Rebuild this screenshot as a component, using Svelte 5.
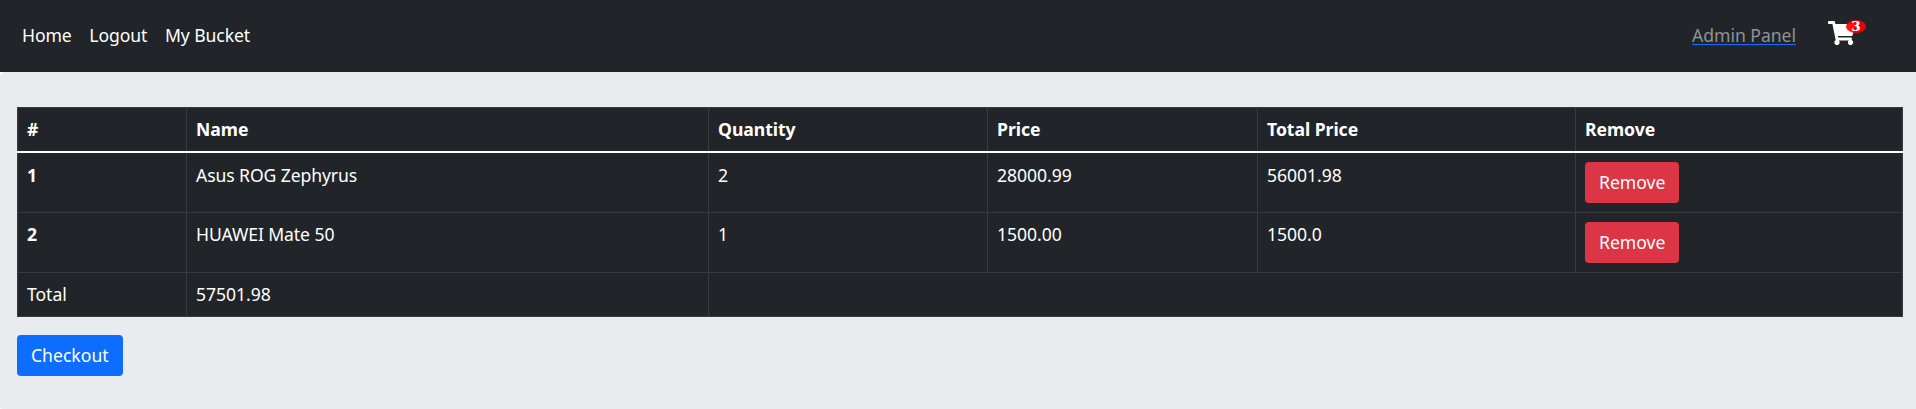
<script>
  const items = [
    { name: 'Asus ROG Zephyrus', quantity: 2, price: '28000.99', total: '56001.98' },
    { name: 'HUAWEI Mate 50', quantity: 1, price: '1500.00', total: '1500.0' }
  ];
</script>

<nav>
  <div class="links"><a href="#home">Home</a><a href="#logout">Logout</a><a href="#bucket">My Bucket</a></div>
  <div class="right">
    <a class="admin" href="#admin">Admin Panel</a>
    <a class="cart" href="#cart" aria-label="Cart">
      <svg viewBox="0 0 576 512" width="27" height="24"><path fill="#fff" d="M528.12 301.319l47.273-208C578.806 78.301 567.391 64 551.99 64H159.208l-9.166-44.81C147.758 8.021 137.93 0 126.529 0H24C10.745 0 0 10.745 0 24v16c0 13.255 10.745 24 24 24h69.883l70.248 343.435C147.325 417.1 136 435.222 136 456c0 30.928 25.072 56 56 56s56-25.072 56-56c0-15.674-6.447-29.835-16.824-40h209.647C430.447 426.165 424 440.326 424 456c0 30.928 25.072 56 56 56s56-25.072 56-56c0-22.172-12.888-41.332-31.579-50.405l5.517-24.276c3.413-15.018-8.002-29.319-23.403-29.319H218.117l-6.545-32h293.145c11.206 0 20.92-7.754 23.403-18.681z"/></svg>
      <span class="badge">3</span>
    </a>
  </div>
</nav>
<main>
  <table>
    <colgroup><col style="width:169px"><col style="width:522px"><col style="width:279px"><col style="width:270px"><col style="width:318px"><col></colgroup>
    <thead><tr><th>#</th><th>Name</th><th>Quantity</th><th>Price</th><th>Total Price</th><th>Remove</th></tr></thead>
    <tbody>
      {#each items as item, i}
        <tr><th>{i + 1}</th><td class="name">{item.name}</td><td>{item.quantity}</td><td>{item.price}</td><td>{item.total}</td><td class="action"><button class="danger">Remove</button></td></tr>
      {/each}
      <tr><td>Total</td><td>57501.98</td><td colspan="4"></td></tr>
    </tbody>
  </table>
  <button class="primary">Checkout</button>
</main>

<style>
  :global(body) { margin: 0; background: #fff; font: 17.6px/26px "Noto Sans", sans-serif; }
  nav { height: 72px; box-sizing: border-box; background: #212529; display: flex; justify-content: space-between; align-items: flex-start; padding: 22px 50px 0 22px; }
  a { color: #fff; text-decoration: none; }
  .links { display: flex; gap: 17.6px; letter-spacing: -.09px; }
  .right { display: flex; align-items: flex-start; }
  .admin { margin-right: 32px; height: 22px; border-bottom: 1px solid #0d6efd; color: #909294; letter-spacing: -.04px; }
  .cart { position: relative; display: flex; width: 38px; margin-top: -1px; }
  .badge { position: absolute; left: 18px; top: -1px; width: 20px; height: 13px; border-radius: 50%; background: rgba(255, 0, 0, .92); font: bold 13.5px/13px "DejaVu Serif", serif; text-align: center; }
  main { box-sizing: border-box; height: 337px; padding: 35px 13px 0 17px; background: #e9ecef; border-radius: 5px 0 0 2px; }
  table { width: 100%; table-layout: fixed; border-collapse: collapse; background: #212529; color: #fff; margin-bottom: 18px; }
  th, td { border: 1px solid #373b3e; padding: 8px 9px 9px; text-align: left; vertical-align: top; }
  td, thead th { letter-spacing: -.04px; }
  .name { letter-spacing: -.1px; }
  thead th { border-bottom: 2px solid #fff; }
  tbody tr:first-child > :not(.action) { padding-top: 9px; }
  button { display: block; box-sizing: border-box; height: 41px; font: inherit; letter-spacing: 0; color: #fff; border: 0; border-radius: 4px; padding: 0 14px 2px; }
  .danger { background: #dc3545; margin-top: 1px; }
  .primary { background: #0d6efd; }
</style>
